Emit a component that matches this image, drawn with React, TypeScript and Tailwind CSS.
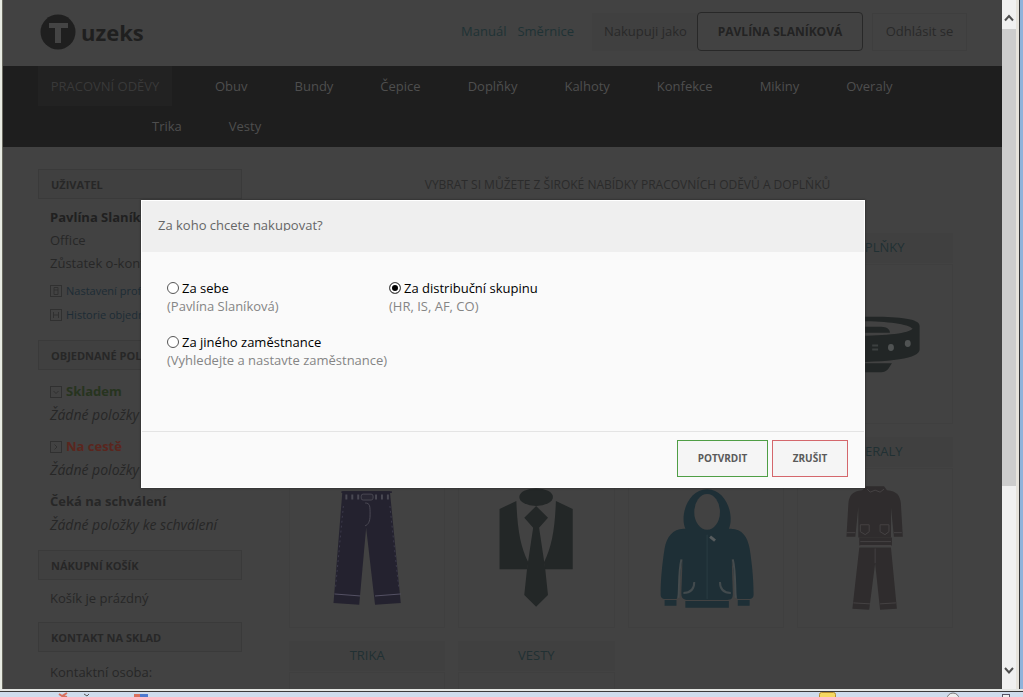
import type { ReactNode } from "react";

const topRow = ["Obuv", "Bundy", "Čepice", "Doplňky", "Kalhoty", "Konfekce", "Mikiny", "Overaly"];
const bottomRow = ["Trika", "Vesty"];

function Heading({ children }: { children: ReactNode }) {
  return (
    <h2 className="flex h-[30px] items-center border border-[#3a3a3a] bg-[#404040] px-3 text-[11px] font-bold uppercase text-[#272727]">
      {children}
    </h2>
  );
}

function Glyph({ d }: { d: string }) {
  return (
    <svg viewBox="0 0 12 12" className="h-3 w-3 shrink-0" fill="none" stroke="#303030" strokeWidth="1">
      <rect x=".5" y=".5" width="11" height="11" />
      <path d={d} />
    </svg>
  );
}

function Jeans() {
  return (
    <svg viewBox="0 0 156 159" className="h-full w-full">
      <path d="M53 22h48l11 113-26 2-9-78-7 78-26-2z" fill="#24222f" />
      <path d="M52 23h51" stroke="#24222f" strokeWidth="2" />
      <path d="M56 28h44" stroke="#494852" strokeWidth="5" strokeDasharray="2 4" />
      <rect x="72" y="25" width="12" height="6" rx="2" fill="#292733" stroke="#494852" />
      <path d="M76 34c5 0 5 3 5 12 0 7-2 10-5 11" fill="none" stroke="#4b4954" />
      <path d="M45 126l26 2M86 128l26-2" stroke="#545163" />
      <path d="M54 37L46 120M101 37l9 83" stroke="#3b394a" strokeDasharray="2 3" />
    </svg>
  );
}

function Suit() {
  return (
    <svg viewBox="0 0 156 159" className="h-full w-full" fill="#232727">
      <ellipse cx="78" cy="28" rx="17" ry="9" />
      <path d="M41 40l17-8c1 28 4 46 12 62l-1 7H41z" />
      <path d="M115 40l-17-8c-1 28-4 46-12 62l1 7h28z" />
      <path d="M78 37l12 12-9 10 6 40 3 28-12 12-12-12 3-28 6-40-9-10z" />
    </svg>
  );
}

function Hoodie() {
  return (
    <svg viewBox="0 0 156 159" className="h-full w-full" fill="#1e2f36">
      <path d="M57 60c-6-14 3-40 22-40s28 26 22 40c13-1 19 8 21 20 3 19 4 34 4 47 0 3-2 4-4 4h-12c-3-2-3-24-6-41 0 14 1 30 1 36s-3 6-7 6H60c-4 0-7-1-7-6s1-22 1-36c-3 17-3 39-6 41H36c-2 0-4-1-4-4 0-13 1-28 4-47 2-12 9-21 21-20z" />
      <ellipse cx="79" cy="43" rx="13" ry="18" fill="#424242" />
      <path d="M36 132h12v6H36zM57 133h44v7H57zM110 132h12v6h-12z" />
      <path d="M79 66v65" stroke="#2b3d43" />
      <path d="M53 91c-3 12-2 27-3 39M105 91c3 12 2 27 3 39" fill="none" stroke="#454b4d" strokeWidth="2" />
      <path d="M66 114c0 7-4 11-11 11M92 114c0 7 4 11 11 11" fill="none" stroke="#424a4d" strokeWidth="2" />
      <path d="M82 68l5 4" stroke="#565b5d" strokeWidth="3" />
    </svg>
  );
}

function Overall() {
  return (
    <svg viewBox="0 0 156 159" className="h-full w-full" fill="#2f2c2d">
      <path d="M69 17h18l3 4c10 1 13 5 14 13l2 34h-9l-3-30v31H61V38l-3 30h-9l2-34c1-8 4-12 14-13z" />
      <path d="M62 69h33v8H62zM62 79h32l6 62-17 1-5-47-6 47-17-1z" />
      <path d="M63 73h31M63 77h31M56 135l17 1M83 136l16-1M49 64h9M97 64h8" stroke="#454243" />
      <path d="M63 56h9v7l-4 3-5-3zM83 56h9v7l-4 3-5-3zM78 80v15M70 20l3 3 5-2 5 2 4-3" fill="none" stroke="#454243" />
    </svg>
  );
}

function Belt() {
  return (
    <svg viewBox="0 0 156 159" className="h-full w-full" fill="#222626">
      <path
        fillRule="evenodd"
        d="M40 53C80 51 123 51 123 61v24c0 9-27 13-83 13zM40 57c40-2 70 1 76 7-5 5-30 8-76 7z"
      />
      <path d="M40 62h44c6 0 9 3 9 6H40zM40 99h55l-4 6c-2 2-4 3-7 3H40z" />
      <path d="M75 81h6M75 85h6" stroke="#3c4040" strokeWidth="2" />
      <ellipse cx="94" cy="83" rx="3" ry="3.500" fill="#505353" />
      <ellipse cx="111" cy="79" rx="3" ry="3.500" fill="#505353" />
    </svg>
  );
}

function Card({ title, children }: { title?: string; children?: ReactNode }) {
  return (
    <a href="#" className="block">
      <h3 className="flex h-[30px] items-center justify-center bg-[#404040] text-[13px] uppercase text-[#213033]">{title}</h3>
      <div className="mt-px h-40 border border-[#3f3f3f]">{children}</div>
    </a>
  );
}

function Option({ id, title, note, checked }: { id: string; title: string; note: string; checked?: boolean }) {
  return (
    <div className="leading-[18px]">
      <div className="flex items-center gap-[3px]">
        <input
          id={id}
          type="radio"
          name="buyer"
          defaultChecked={checked}
          className="h-3 w-3 appearance-none rounded-full border border-[#555] bg-white checked:bg-black checked:shadow-[inset_0_0_0_2px_white]"
        />
        <label htmlFor={id} className="whitespace-nowrap text-black">{title}</label>
      </div>
      <p className="whitespace-nowrap text-[#858585]">{note}</p>
    </div>
  );
}

function Status({ title, note }: { title: ReactNode; note: string }) {
  return (
    <div>
      {title}
      <p className="text-sm italic leading-6">{note}</p>
    </div>
  );
}

function Sidebar() {
  return (
    <aside className="w-[204px] shrink-0 leading-[23px]">
      <Heading>Uživatel</Heading>
      <div className="whitespace-nowrap px-3 pt-[7px] text-[#272727]">
        <p className="font-bold text-[#202020]">Pavlína Slaníková</p>
        <p>Office</p>
        <p>Zůstatek o-konta</p>
      </div>
      <ul className="mb-[13px] whitespace-nowrap px-3 pt-1 text-[11px] leading-6 text-[#1d2c35]">
        <li className="flex items-center gap-1">
          <Glyph d="M4 2.500h4v7H4zM4 5h4" />
          <a href="#">Nastavení profilu</a>
        </li>
        <li className="flex items-center gap-1">
          <Glyph d="M3.500 3v6M8.500 3v6M3.500 6h5" />
          <a href="#">Historie objednávek</a>
        </li>
      </ul>
      <Heading>Objednané položky</Heading>
      <div className="flex flex-col gap-2 whitespace-nowrap px-3 pb-[13px] pt-[10px] text-[#272727]">
        <Status
          title={<p className="flex items-center gap-1 font-bold text-[#27341f]"><Glyph d="M3.500 5L6 7.500 8.500 5" />Skladem</p>}
          note="Žádné položky"
        />
        <Status
          title={<p className="flex items-center gap-1 font-bold text-[#5a261e]"><Glyph d="M4.500 3.500L7 6 4.500 8.500" />Na cestě</p>}
          note="Žádné položky"
        />
        <Status title={<p className="font-bold">Čeká na schválení</p>} note="Žádné položky ke schválení" />
      </div>
      <Heading>Nákupní košík</Heading>
      <p className="px-3 pb-3 pt-[7px] text-[#272727]">Košík je prázdný</p>
      <Heading>Kontakt na sklad</Heading>
      <p className="px-3 pt-[9px] text-[#272727]">Kontaktní osoba:</p>
    </aside>
  );
}

function ScrollBar() {
  return (
    <div className="flex w-[14px] shrink-0 flex-col bg-[#f0f0f0]">
      <svg viewBox="0 0 14 29" className="h-[29px] w-[14px] shrink-0" fill="none" stroke="#505050" strokeWidth="2">
        <path d="M3 20.500l4-4.500 4 4.500" />
      </svg>
      <div className="grow-[457] basis-0 bg-[#cdcdcd]" />
      <div className="grow-[174] basis-0" />
      <svg viewBox="0 0 14 29" className="h-[29px] w-[14px] shrink-0" fill="none" stroke="#505050" strokeWidth="2">
        <path d="M3 8l4 4.500L11 8" />
      </svg>
    </div>
  );
}

function Dialog() {
  return (
    <div className="absolute inset-0 flex items-start justify-center pl-px pt-[200px]">
      <div role="dialog" aria-labelledby="dialog-title" className="w-[724px] border border-white bg-[#fafafa] shadow-[0_0_2px_#222]">
        <div className="h-[51px] bg-[#efefef] px-4 pt-[18px]">
          <h1 id="dialog-title" className="overflow-hidden leading-3 text-[#666]">Za koho chcete nakupovat?</h1>
        </div>
        <form>
          <div className="grid h-[180px] grid-cols-[222px_1fr] content-start gap-y-[18px] border-b border-[#e4e4e4] px-[25px] pt-[27px]">
            <Option id="self" title="Za sebe" note="(Pavlína Slaníková)" />
            <Option id="group" title="Za distribuční skupinu" note="(HR, IS, AF, CO)" checked />
            <Option id="other" title="Za jiného zaměstnance" note="(Vyhledejte a nastavte zaměstnance)" />
          </div>
          <div className="flex justify-end gap-1 px-4 pb-[10px] pt-2 text-[10px] font-bold text-[#5a5a5a]">
            <button type="button" className="h-[37px] w-[91px] border border-[#4f9e45] bg-[#f5f5f5]">POTVRDIT</button>
            <button type="button" className="h-[37px] w-[76px] border border-[#d4676c] bg-[#f5f5f5]">ZRUŠIT</button>
          </div>
        </form>
      </div>
    </div>
  );
}

export default function App() {
  return (
    <div className="flex h-screen flex-col overflow-hidden bg-[#cfdcec] font-['Open_Sans','Noto_Sans',sans-serif] text-[13px]">
      <div className="flex min-h-0 flex-1">
        <div className="w-[3px] shrink-0 border-r border-[#6a6a60] bg-[#e8ebe3]" />
        <div className="relative min-w-0 flex-1 overflow-hidden bg-[#424242]">
          <header className="flex h-[66px] items-start justify-between pl-[37px] pr-[35px] pt-3">
            <a href="#" className="flex items-center gap-[5px] pt-0.5 text-[22px] font-bold leading-9 text-[#1f1f1f]">
              <svg viewBox="0 0 36 36" className="h-9 w-9">
                <circle cx="18" cy="18" r="17.500" fill="#1f1f1f" />
                <path d="M9 9h19v5h-7v15h-6V14H9z" fill="#444" />
              </svg>
              uzeks
            </a>
            <div className="flex items-center text-[#292929]">
              <a href="#" className="mr-[11px] text-[#1f3235]">Manuál</a>
              <a href="#" className="mr-[18px] text-[#1f3235]">Směrnice</a>
              <span className="flex h-[38px] w-[105px] items-center bg-[#404040] pl-3">Nakupuji jako</span>
              <button type="button" className="h-[39px] w-[166px] rounded-sm border border-[#282828] text-xs font-bold text-[#232323]">PAVLÍNA SLANÍKOVÁ</button>
              <button type="button" className="ml-[9px] h-[38px] w-[95px] border border-[#3e3e3e]">Odhlásit se</button>
            </div>
          </header>
          <nav className="h-[81px] whitespace-nowrap bg-[#1e1e1e] pl-[35px] leading-10 text-[#4e4e4e]">
            <ul className="flex gap-[47px]">
              <li className="-mr-1 w-[134px] bg-[#222] text-center text-[#393939]"><a href="#">PRACOVNÍ ODĚVY</a></li>
              {topRow.map((t) => <li key={t}><a href="#">{t}</a></li>)}
            </ul>
            <ul className="flex gap-[47px] pl-[114px]">
              {bottomRow.map((t) => <li key={t}><a href="#">{t}</a></li>)}
            </ul>
          </nav>
          <div className="flex gap-[47px] pl-[35px] pr-9 pt-[22px]">
            <Sidebar />
            <main className="min-w-0 flex-1">
              <p className="text-center text-xs leading-8 text-[#2b2b2b]">VYBRAT SI MŮŽETE Z ŠIROKÉ NABÍDKY PRACOVNÍCH ODĚVŮ A DOPLŇKŮ</p>
              <div className="grid grid-cols-4 gap-[13px] pr-[13px] pt-8">
                <Card />
                <Card />
                <Card />
                <Card title="Doplňky"><Belt /></Card>
                <Card><Jeans /></Card>
                <Card><Suit /></Card>
                <Card><Hoodie /></Card>
                <Card title="Overaly"><Overall /></Card>
                <Card title="Trika" />
                <Card title="Vesty" />
              </div>
            </main>
          </div>
          <Dialog />
        </div>
        <ScrollBar />
        <div className="w-[7px] shrink-0 border-l-[3px] border-[#e6e3dc] bg-[#8fb2da]">
          <div className="h-full w-px bg-[#333]" />
        </div>
      </div>
      <div className="h-[3px] shrink-0 border-b border-[#3a3a3a] bg-[#e4e6e3]" />
      <svg className="h-[5px] w-full shrink-0" fill="none">
        <path d="M59 2l3 2 5-3M62 4l5 1" stroke="#d9705e" strokeWidth="2" />
        <path d="M84 2l3 2 2-2" stroke="#555" />
        <path d="M134 2h6v3h-6z" fill="#d9705e" />
        <path d="M140 2h8v3h-8z" fill="#4d79cf" />
        <rect x="819.500" y=".5" width="16" height="7" rx="2" fill="#f5d860" stroke="#b98f2c" />
        <circle cx="953" cy="7" r="6" fill="#eee" stroke="#777" />
        <rect x="1002.500" y="2.500" width="7" height="5" fill="#eee" stroke="#556" />
      </svg>
    </div>
  );
}
